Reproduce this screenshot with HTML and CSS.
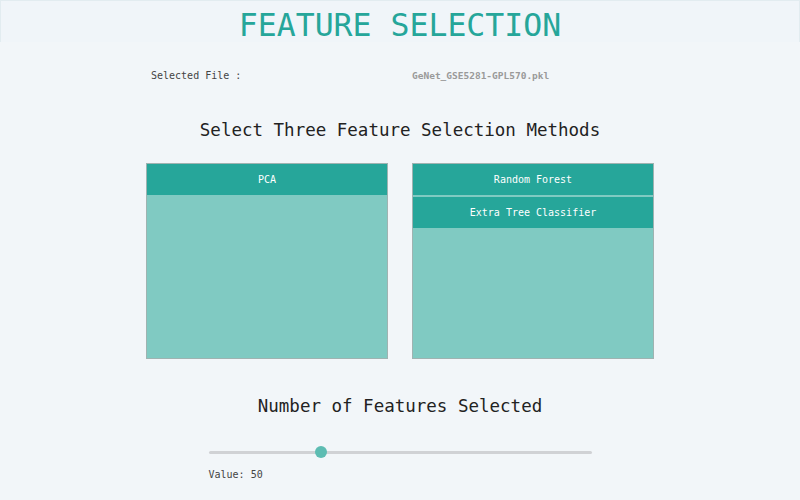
FILE: index.html
```html
<!DOCTYPE html>
<html>
<head>
<meta charset="utf-8">
<link rel="stylesheet" href="styles.css">
</head>
<body>
<header class="header">
  <h1 class="title">FEATURE SELECTION</h1>
</header>
<main class="content">
  <div class="file-row">
    <span class="file-label">Selected File :</span>
    <span class="file-name">GeNet_GSE5281-GPL570.pkl</span>
  </div>
  <h2 class="section-title">Select Three Feature Selection Methods</h2>
  <div class="lists">
    <div class="list">
      <div class="item">PCA</div>
    </div>
    <div class="list">
      <div class="item">Random Forest</div>
      <div class="item">Extra Tree Classifier</div>
    </div>
  </div>
  <h2 class="section-title second">Number of Features Selected</h2>
  <div class="slider-wrap">
    <input class="slider" type="range" min="10" max="150" value="50">
    <div class="value">Value: 50</div>
  </div>
</main>
</body>
</html>
```
FILE: styles.css
```css
html, body {
  margin: 0;
  padding: 0;
}
body {
  background: #f2f6f9;
  font-family: "DejaVu Sans Mono", "Liberation Mono", monospace;
  color: #333;
  width: 800px;
  height: 500px;
  overflow: hidden;
}
.header {
  height: 42px;
  background: #f0f5f9;
  border-top: 1px solid #e2ecf0;
  border-left: 1px solid #e2ecf0;
  border-right: 1px solid #e2ecf0;
  box-sizing: border-box;
  display: flex;
  justify-content: center;
}
.title {
  margin: 0;
  padding-top: 6px;
  font-weight: normal;
  font-size: 31.5px;
  line-height: 36px;
  color: #26a69a;
  letter-spacing: 0;
}
.content {
  width: 508px;
  margin: 0 auto;
}
.file-row {
  display: grid;
  grid-template-columns: 1fr 1fr;
  column-gap: 24px;
  margin-top: 28px;
  align-items: center;
}
.file-label {
  padding-left: 5px;
  font-size: 10px;
  color: #444;
}
.file-name {
  font-size: 9.5px;
  font-weight: bold;
  color: #9a9a9a;
}
.section-title {
  margin: 0;
  margin-top: 38px;
  text-align: center;
  font-weight: normal;
  font-size: 17.5px;
  line-height: 22px;
  color: #222;
}
.lists {
  display: grid;
  grid-template-columns: 242px 242px;
  column-gap: 24px;
  margin-top: 22px;
}
.list {
  height: 196px;
  box-sizing: border-box;
  border: 1px solid #9fb3b1;
  background: #80cac2;
  display: flex;
  flex-direction: column;
  gap: 2px;
}
.item {
  height: 31px;
  background: #26a69a;
  color: #ffffff;
  font-size: 10px;
  display: flex;
  align-items: center;
  justify-content: center;
}
.second {
  margin-top: 36px;
}
.slider-wrap {
  width: 383px;
  margin: 29px auto 0;
}
.slider {
  -webkit-appearance: none;
  appearance: none;
  display: block;
  width: 383px;
  height: 12px;
  margin: 0;
  background: transparent;
}
.slider::-webkit-slider-runnable-track {
  height: 3px;
  background: #d0d2d5;
  border-radius: 2px;
}
.slider::-webkit-slider-thumb {
  -webkit-appearance: none;
  appearance: none;
  width: 12px;
  height: 12px;
  border-radius: 50%;
  background: #5dbcb2;
  border: none;
  margin-top: -4.5px;
}
.value {
  margin-top: 11px;
  font-size: 10px;
  color: #444;
}
```
